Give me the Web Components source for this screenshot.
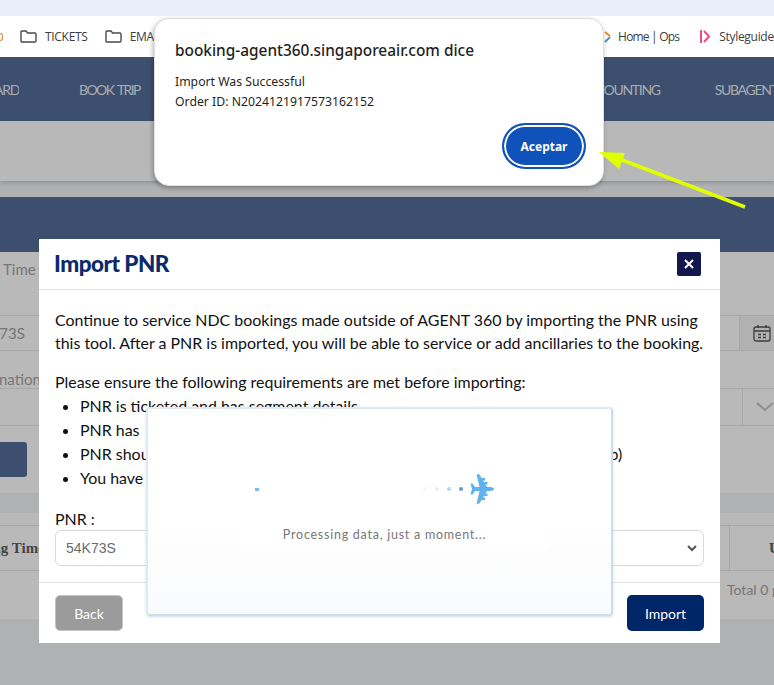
<!DOCTYPE html>
<html lang="en">
<head>
<meta charset="utf-8">
<title>Import PNR</title>
<style>
  html, body { margin: 0; padding: 0; background: #b0b1b3; }
  body { width: 774px; height: 685px; overflow: hidden; position: relative; }
</style>
</head>
<body>
<agent-page></agent-page>
<import-modal>
  <span slot="title">Import PNR</span>
</import-modal>
<loading-card>Processing data, just a moment...</loading-card>
<alert-box heading="booking-agent360.singaporeair.com dice" action="Aceptar">
  <div>Import Was Successful</div>
  <div>Order ID: N2024121917573162152</div>
</alert-box>
<yellow-arrow></yellow-arrow>

<script>
class BookmarkLink extends HTMLElement {
  constructor() {
    super();
    this.attachShadow({ mode: 'open' });
    this.shadowRoot.innerHTML = `
      <style>
        :host {
          display: inline-flex;
          align-items: center;
          flex: none;
          gap: 8px;
          font: 12px "Open Sans", "Liberation Sans", sans-serif;
          letter-spacing: -0.3px;
          color: #3c4043;
          white-space: nowrap;
        }
        ::slotted(svg) { display: block; flex: none; }
      </style>
      <slot name="icon"></slot><slot></slot>
    `;
  }
}
customElements.define('bookmark-link', BookmarkLink);

class AgentPage extends HTMLElement {
  constructor() {
    super();
    this.attachShadow({ mode: 'open' });
    const folder = `<svg slot="icon" width="17" height="13" viewBox="0 0 17 13" fill="none" stroke="#4a4a4a" stroke-width="1.4"><path d="M1 2.2c0-.7.4-1.2 1.100-1.200h4l1.500 2h7.300c.7 0 1.100.5 1.100 1.200v6.600c0 .7-.4 1.200-1.100 1.200H2.100c-.7 0-1.100-.5-1.100-1.200z"/></svg>`;
    this.shadowRoot.innerHTML = `
      <style>
        :host { display: block; width: 774px; height: 685px; overflow: hidden; background: #b0b1b3; }
        .tabs { height: 16px; background: #e9eef8; }
        .marks { height: 41px; background: #fff; display: flex; align-items: center; overflow: hidden; }
        .marks .stub { width: 3px; height: 8px; flex: none; margin-right: 17px; border: 1.500px solid #e8872b; border-left: 0; border-radius: 0 5px 5px 0; box-sizing: border-box; }
        .marks .mid { width: 431px; flex: none; }
        nav { height: 64px; background: #3d4f6f; display: flex; align-items: center; overflow: hidden;
          font: 14px "Lato", "Liberation Sans", sans-serif; letter-spacing: -1.3px; word-spacing: 2px; color: #a9acb2; white-space: nowrap; }
        nav span { flex: none; }
        .grey { height: 60px; background: #b8b8b8; box-shadow: 0 2px 4px rgba(0,0,0,.18); position: relative; }
        .gap { height: 16px; }
        .band { height: 55px; background: #3d4f6f; }
        .form { height: 367px; background: #b9b9b9; font: 15px "Lato", "Liberation Sans", sans-serif; color: #767676; }
        .row { display: flex; justify-content: space-between; box-sizing: border-box; }
        .label { height: 63px; align-items: flex-start; padding: 8px 0 0 3px; }
        .field { height: 36px; align-items: center; border-top: 1px solid #a6a6a6; border-bottom: 1px solid #a6a6a6; }
        .field.tall { height: 38px; }
        .field .cell { width: 35px; height: 100%; flex: none; box-sizing: border-box; padding-left: 13px; display: flex; align-items: center; border-left: 1px solid #a8a8a8; background: #b1b1b1; }
        .cap { height: 37px; align-items: flex-end; padding-bottom: 0; }
        .action { margin-top: 16px; width: 27px; height: 35px; background: #3d4f6f; border-radius: 0 3px 3px 0; }
        .stripe { margin-top: 16px; height: 20px; background: #b0b1b3; }
        .thead { margin-top: 12px; height: 46px; border-top: 1px solid #a6a6a6; border-bottom: 1px solid #a6a6a6; align-items: center; font: bold 15px "Liberation Serif", serif; color: #444; }
        .thead .end { width: 45px; height: 100%; box-sizing: border-box; padding-left: 39px; border-left: 1px solid #a6a6a6; display: flex; align-items: center; overflow: hidden; white-space: nowrap; }
        .thead .start { margin-left: -45px; white-space: nowrap; }
        .total { justify-content: flex-end; padding-top: 10px; white-space: nowrap; font-size: 14px; }
        .total span { width: 47px; overflow: hidden; }
      </style>
      <div class="tabs"></div>
      <div class="marks">
        <div class="stub"></div>
        <bookmark-link>${folder}TICKETS</bookmark-link>
        <bookmark-link style="margin-left:17px">${folder}EMAILS</bookmark-link>
        <div class="mid"></div>
        <bookmark-link style="gap:6px;letter-spacing:-0.8px">
          <svg slot="icon" width="12" height="14" viewBox="0 0 12 14" fill="none" stroke-width="2"><path d="M5 2l5 4" stroke="#e8872b"/><path d="M10 7l-5 5" stroke="#4a90e2"/></svg>
          Home | Ops
        </bookmark-link>
        <bookmark-link style="margin-left:21px;gap:9px">
          <svg slot="icon" width="10" height="13" viewBox="0 0 10 13" fill="none" stroke="#ee4c83" stroke-width="2"><path d="M1 0v13"/><path d="M4 1l5 5.500-5 5.500"/></svg>
          Styleguide
        </bookmark-link>
      </div>
      <nav>
        <span style="width:19px;direction:rtl;overflow:hidden">DASHBOARD</span>
        <span style="margin-left:60px;letter-spacing:-1.6px">BOOK TRIP</span>
        <span style="margin-left:440px">ACCOUNTING</span>
        <span style="margin-left:55px">SUBAGENT</span>
      </nav>
      <div class="grey"></div>
      <div class="gap"></div>
      <div class="band"></div>
      <div class="form">
        <div class="row label"><span>Time</span></div>
        <div class="row field"><span style="margin-left:-28px">54K73S</span>
          <div class="cell">
            <svg width="18" height="18" viewBox="0 0 18 18" fill="none" stroke="#3c3c3c" stroke-width="1.300"><rect x="1" y="3" width="16" height="14" rx="2"/><path d="M1 7h16M5 1v3M13 1v3M5 10.500h3M10 10.500h3M5 13.500h3M10 13.500h3"/></svg>
          </div>
        </div>
        <div class="row cap"><span style="margin-left:-36px">Destination</span></div>
        <div class="row field tall">
          <span></span>
          <div class="cell" style="background:none;width:32px;padding-left:13px">
            <svg width="18" height="10" viewBox="0 0 18 10" fill="none" stroke="#8e8e8e" stroke-width="2"><path d="M1 1l8 7 8-7"/></svg>
          </div>
        </div>
        <div class="action"></div>
        <div class="stripe"></div>
        <div class="row thead">
          <span class="start">Booking Time</span>
          <div class="end"><span>Updated</span></div>
        </div>
        <div class="row total"><span>Total 0 pages</span></div>
      </div>
    `;
  }
}
customElements.define('agent-page', AgentPage);

class ImportModal extends HTMLElement {
  constructor() {
    super();
    this.attachShadow({ mode: 'open' });
    this.shadowRoot.innerHTML = `
      <style>
        :host {
          position: absolute; left: 39px; top: 239px; width: 681px; height: 404px;
          display: flex; flex-direction: column; background: #fff; color: #111;
          font: 15.950px/23px "Lato", "Liberation Sans", sans-serif;
        }
        header { height: 51px; flex: none; box-sizing: border-box; border-bottom: 1px solid #dee2e6;
          display: flex; align-items: center; justify-content: space-between; padding: 0 19px 0 15px; }
        .title { font: 900 22.500px "Lato", "Liberation Sans", sans-serif; color: #0a2a6b; letter-spacing: -0.5px; margin-top: -2px; }
        .close { width: 24px; height: 24px; background: #12184f; border-radius: 2px; color: #fff;
          display: flex; align-items: center; justify-content: center; }
        main { flex: 1; padding: 18px 16px 0; }
        p { margin: 0; }
        .second { margin-top: 16px; }
        ul { margin: 1px 0 0; padding: 0 0 0 25px; line-height: 24px; }
        li { white-space: nowrap; }
        .gap { display: inline-block; width: 460px; }
        label { display: block; margin-top: 17px; line-height: 23px; }
        .select { height: 36px; margin-top: 0; box-sizing: border-box; border: 1px solid #d8dbde; border-radius: 6px;
          display: flex; align-items: center; justify-content: space-between; padding: 0 6px 0 10px;
          font: 14px "Liberation Sans", sans-serif; color: #6b6b6b; }
        footer { height: 61px; flex: none; box-sizing: border-box; border-top: 1px solid #dee2e6;
          display: flex; align-items: center; justify-content: space-between; padding: 0 16px; }
        button { height: 36px; border: 1px solid transparent; border-radius: 5px; color: #fff; padding: 0;
          font: 14px "Lato", "Liberation Sans", sans-serif; }
        .back { width: 68px; background: #9b9b9b; border-color: #c4c4c4; }
        .go { width: 77px; background: #00266a; }
      </style>
      <header>
        <div class="title"><slot name="title"></slot></div>
        <div class="close">
          <svg width="10" height="10" viewBox="0 0 10 10" stroke="#fff" stroke-width="2"><path d="M1 1l8 8M9 1l-8 8"/></svg>
        </div>
      </header>
      <main>
        <p>Continue to service NDC bookings made outside of AGENT 360 by importing the PNR using this tool. After a PNR is imported, you will be able to service or add ancillaries to the booking.</p>
        <p class="second">Please ensure the following requirements are met before importing:</p>
        <ul>
          <li>PNR is ticketed and has segment details</li>
          <li>PNR has</li>
          <li>PNR shou<span class="gap"></span>p)</li>
          <li>You have</li>
        </ul>
        <label>PNR :</label>
        <div class="select">
          <span>54K73S</span>
          <svg width="10" height="7" viewBox="0 0 10 7" fill="none" stroke="#555" stroke-width="2"><path d="M1 1l4 4 4-4"/></svg>
        </div>
      </main>
      <footer>
        <button class="back">Back</button>
        <button class="go">Import</button>
      </footer>
    `;
  }
}
customElements.define('import-modal', ImportModal);

class LoadingCard extends HTMLElement {
  constructor() {
    super();
    this.attachShadow({ mode: 'open' });
    this.shadowRoot.innerHTML = `
      <style>
        :host {
          position: absolute; left: 146px; top: 407px; width: 467px; height: 209px; box-sizing: border-box;
          display: flex; flex-direction: column; align-items: center;
          background: linear-gradient(#fff 50%, #fafbfc); border: 2px solid #dfe8f3; border-bottom-color: #cfdcea; border-right-color: #cfdcea;
          border-radius: 4px; box-shadow: 0 1px 3px rgba(90,120,160,.25);
        }
        .track { width: 240px; height: 30px; margin-top: 65px; margin-left: -12px; display: flex; align-items: center; }
        .tail { width: 4px; height: 3px; margin-left: 1px; background: #7dbcec; flex: none; }
        .dots { display: flex; gap: 8px; margin-left: auto; margin-right: 7px; }
        .dots i { width: 4px; height: 4px; border-radius: 50%; background: #4f8fd0; }
        svg { flex: none; display: block; }
        .text { width: 308px; height: 32px; margin-top: 14px; margin-left: 31px; box-sizing: border-box; padding-right: 21px;
          display: flex; align-items: center; justify-content: center;
          background: #fff; font: 12.500px "Lato", "Liberation Sans", sans-serif; letter-spacing: 0.75px; color: #777; }
      </style>
      <div class="track">
        <div class="tail"></div>
        <div class="dots">
          <i style="opacity:.08"></i><i style="opacity:.14"></i><i style="opacity:.4"></i><i style="opacity:.9"></i>
        </div>
        <svg width="24" height="30" viewBox="0 0 24 30" fill="#5fb3ea">
          <path d="M24 15c0-1.200-2-2-4-2h-3L9.500 0.500 6.500 0l3 13H5L2.500 9.500 0.500 9.500 2 15 0.500 20.500l2 0 2.500-3.500h4.500l-3 13 3-.5L17 17h3c2 0 4-.8 4-2z"/>
          <path d="M11.500 4h3.500v2.500h-3zM11.500 26h3.500v-2.500h-3zM14 8h3.500v2.500h-3zM14 22h3.500v-2.500h-3z"/>
        </svg>
      </div>
      <div class="text"><slot></slot></div>
    `;
  }
}
customElements.define('loading-card', LoadingCard);

class AlertBox extends HTMLElement {
  static get observedAttributes() {
    return ['heading', 'action'];
  }

  constructor() {
    super();
    this.attachShadow({ mode: 'open' });
    this.render();
  }

  attributeChangedCallback() {
    this.render();
  }

  render() {
    const heading = this.getAttribute('heading') || '';
    const action = this.getAttribute('action') || '';
    this.shadowRoot.innerHTML = `
      <style>
        :host {
          position: absolute; left: 154px; top: 18px; width: 450px; height: 168px; box-sizing: border-box;
          display: flex; flex-direction: column; padding: 22px 17px 16px 20px;
          background: #fff; border: 1px solid #e0e0e0; border-radius: 15px;
          box-shadow: -1px 2px 5px rgba(0,0,0,.3); color: #1f1f1f;
          font: 12.250px/20px "Noto Sans", "Open Sans", sans-serif;
        }
        h2 { margin: 0 0 11px; font: 500 15.400px/20px "Noto Sans", "Open Sans", sans-serif; }
        .msg { flex: 1; }
        button { align-self: flex-end; width: 84px; height: 46px; box-sizing: border-box; padding: 0;
          background: #0f52ba; color: #fff; border: 2px solid #0f52ba; border-radius: 23px;
          box-shadow: inset 0 0 0 2px #fff;
          font: bold 12px "Noto Sans", "Open Sans", sans-serif; }
      </style>
      <h2>${heading}</h2>
      <div class="msg"><slot></slot></div>
      <button>${action}</button>
    `;
  }
}
customElements.define('alert-box', AlertBox);

class YellowArrow extends HTMLElement {
  constructor() {
    super();
    this.attachShadow({ mode: 'open' });
    this.shadowRoot.innerHTML = `
      <style>
        :host { position: absolute; left: 590px; top: 145px; width: 165px; height: 70px; display: block; pointer-events: none; }
        svg { display: block; }
      </style>
      <svg width="165" height="70" viewBox="590 145 165 70">
        <path d="M745 207L617 158" stroke="#e0ff00" stroke-width="3.500" fill="none"/>
        <path d="M599 152L625 153 619 169z" fill="#e0ff00"/>
      </svg>
    `;
  }
}
customElements.define('yellow-arrow', YellowArrow);
</script>
</body>
</html>
